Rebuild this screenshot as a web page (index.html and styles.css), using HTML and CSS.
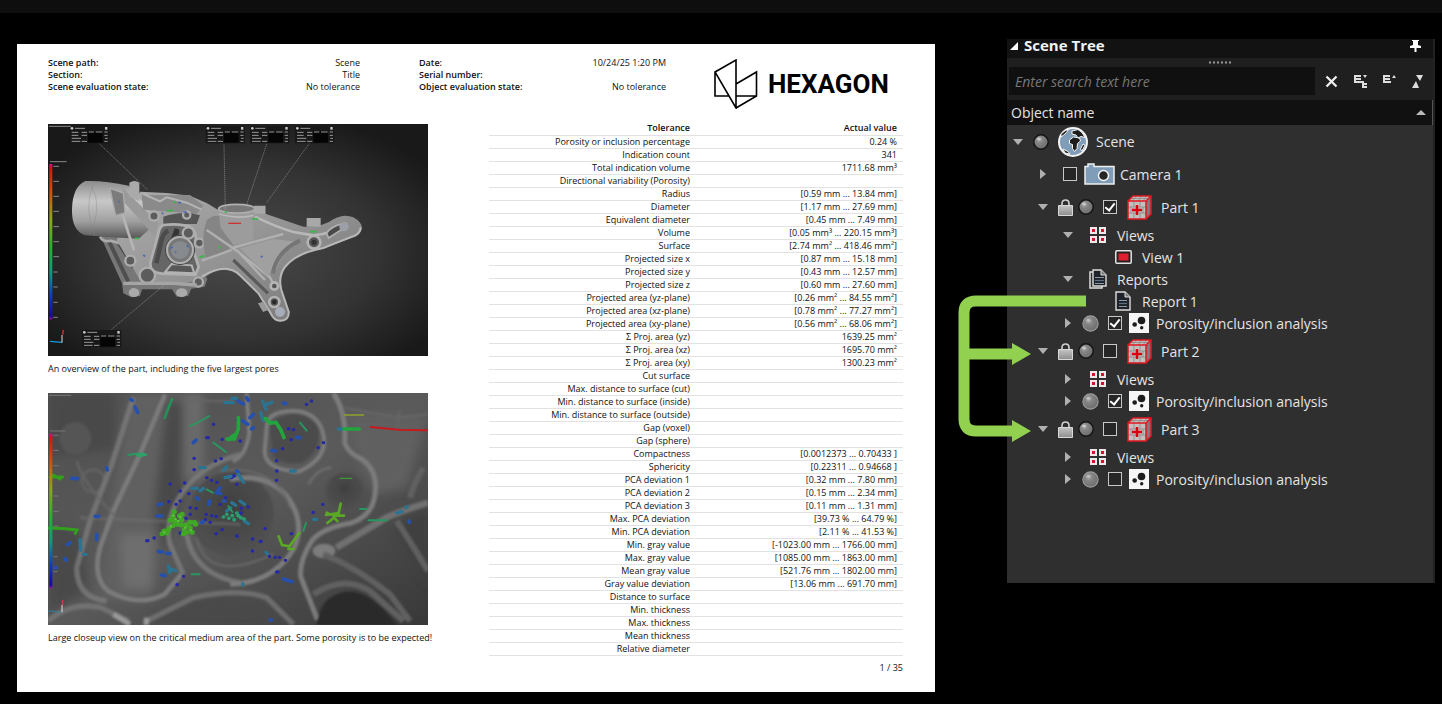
FILE: index.html
```html
<!DOCTYPE html>
<html lang="en">
<head>
<meta charset="utf-8">
<meta name="viewport" content="width=device-width, initial-scale=1">
<title>Porosity report</title>
<link rel="stylesheet" href="styles.css">
</head>
<body>
<svg class="defs" aria-hidden="true">
  <defs>
    <radialGradient id="ball" cx=".38" cy=".32" r=".7"><stop offset="0" stop-color="#b4b4b4"/><stop offset=".35" stop-color="#858585"/><stop offset="1" stop-color="#6c6c6c"/></radialGradient>
    <linearGradient id="lockfill" x1="0" y1="0" x2="0" y2="1"><stop offset="0" stop-color="#c4c4c4"/><stop offset="1" stop-color="#8e8e8e"/></linearGradient>
    <linearGradient id="scale" x1="0" y1="0" x2="0" y2="1"><stop offset="0" stop-color="#d01090"/><stop offset=".03" stop-color="#e01010"/><stop offset=".2" stop-color="#c85a10"/><stop offset=".36" stop-color="#8aa81c"/><stop offset=".55" stop-color="#20b030"/><stop offset=".7" stop-color="#109a80"/><stop offset=".84" stop-color="#1040c0"/><stop offset=".98" stop-color="#1808a0"/><stop offset="1" stop-color="#a010b0"/></linearGradient>
    <symbol id="i-down" viewBox="0 0 10 6"><path d="M0 0h10L5 6z" fill="#b0b0b0"/></symbol>
    <symbol id="i-right" viewBox="0 0 6 10"><path d="M0 0v10L6 5z" fill="#b0b0b0"/></symbol>
    <symbol id="i-ball" viewBox="0 0 16 16"><circle cx="8" cy="8" r="7.2" fill="url(#ball)" stroke="#141414" stroke-width="1.4"/><ellipse cx="6" cy="5" rx="1.8" ry="1.3" fill="#d8d8d8" opacity=".7"/></symbol>
    <symbol id="i-ball2" viewBox="0 0 16 16"><circle cx="8" cy="8" r="7.2" fill="url(#ball)" stroke="#9c9c9c" stroke-width="1"/><ellipse cx="6" cy="5" rx="1.8" ry="1.3" fill="#c8c8c8" opacity=".7"/></symbol>
    <symbol id="i-lock" viewBox="0 0 15 17"><path d="M4 7V4.5C4 2.2 5.4 1 7.5 1S11 2.2 11 4.5V7" fill="none" stroke="#d2d2d2" stroke-width="1.6"/><path d="M.5 6.5h14v10H.5z" fill="url(#lockfill)" stroke="#d8d8d8"/></symbol>
    <symbol id="i-cube" viewBox="0 0 25 25">
      <path d="M1 6l5-5h18v18l-5 5H1z" fill="#c4bebe"/>
      <path d="M19 6l5-5v18l-5 5z" fill="#7c7474"/>
      <path d="M1 12h18M1 18h18M7 6v6M13 6v6M4 12v6M16 12v6M7 18v6M13 18v6M3.500 3.500h18v17M9 1L5 6M15 1l-4 5M20 1l-4 5M19 12l5-5M19 18l5-5" fill="none" stroke="#8a8080" stroke-width=".7"/>
      <path d="M1 6l5-5h18v18l-5 5H1zM1 6h18v18M19 6l5-5" fill="none" stroke="#e01820" stroke-width="1.500"/>
      <path d="M10 10v10M5 15h10" stroke="#d8000c" stroke-width="2.400"/>
    </symbol>
    <symbol id="i-views" viewBox="0 0 16 16"><path d="M0 0h7v7H0zM9 0h7v7H9zM0 9h7v7H0zM9 9h7v7H9z" fill="#f0e8e8"/><path d="M2 2h3v3H2zM11 2h3v3h-3zM2 11h3v3H2zM11 11h3v3h-3z" fill="#d0142c"/></symbol>
    <symbol id="i-view" viewBox="0 0 17 14"><rect x=".8" y=".8" width="15.400" height="12.400" rx="1" fill="#2a2020" stroke="#e4e4e4" stroke-width="1.500"/><path d="M3.500 3.500h10v7h-10z" fill="#e02030"/></symbol>
    <symbol id="i-doc" viewBox="0 0 16 20"><path d="M1 1h9l5 5v13H1z" fill="#20242a" stroke="#dedede" stroke-width="1.400"/><path d="M10 1v5h5" fill="#777" stroke="#dedede"/><path d="M4 9.500h8M4 15.500h8" stroke="#8b98a8" stroke-width="1.200"/><path d="M4 12.500h8" stroke="#5c7088" stroke-width="1.200"/></symbol>
    <symbol id="i-docs" viewBox="0 0 18 20"><path d="M4 3H1v16h12v-2" fill="none" stroke="#dedede" stroke-width="1.500"/><path d="M4 1h8l5 5v11H4z" fill="#20242a" stroke="#dedede" stroke-width="1.400"/><path d="M12 1v5h5" fill="#777" stroke="#dedede"/><path d="M6 8.500h9M6 14.500h9" stroke="#8b98a8" stroke-width="1.200"/><path d="M6 11.500h9" stroke="#5c7088" stroke-width="1.200"/></symbol>
    <symbol id="i-pores" viewBox="0 0 20 20"><path d="M0 0h20v20H0z" fill="#f6f6f6"/><circle cx="12.500" cy="7.500" r="3.800" fill="#1c1c1c"/><circle cx="5.700" cy="11.500" r="2.300" fill="#1c1c1c"/><circle cx="12.700" cy="14.800" r="1.700" fill="#1c1c1c"/></symbol>
    <symbol id="i-camera" viewBox="0 0 31 22"><path d="M1 3.500h3V1h6v2.500h20V21H1z" fill="#7f9cb8" stroke="#f0f0f0" stroke-width="1.500"/><circle cx="19.500" cy="12.500" r="5" fill="#262626" stroke="#f4f4f4" stroke-width="1.500"/></symbol>
    <symbol id="i-globe" viewBox="0 0 30 30"><circle cx="15" cy="15" r="14" fill="#7f9cb8" stroke="#f4f4f4" stroke-width="2"/><path d="M14 4l6-1.500 4 3 3 5-4-1-3 1.500-2-3-4-1zM11.500 13l4-3 6 1 1 3-3 2.500-.5 5-2.500 3-2-3v-4l-3-1zM3 7l5-4 2 .5-3 3.500-4 3zM5 22l5 2.500 2 2.500-5-1zM25 17l2 1-3 6-1.500-2z" fill="#1d1d1d" stroke="#f4f4f4" stroke-width="1"/></symbol>
  </defs>
</svg>

<div class="topbar"></div>
<main class="stage">
  <article class="report">
    <header class="report-head">
      <dl class="meta">
        <div><dt>Scene path:</dt><dd>Scene</dd></div>
        <div><dt>Section:</dt><dd>Title</dd></div>
        <div><dt>Scene evaluation state:</dt><dd>No tolerance</dd></div>
      </dl>
      <dl class="meta">
        <div><dt>Date:</dt><dd>10/24/25 1:20 PM</dd></div>
        <div><dt>Serial number:</dt><dd></dd></div>
        <div><dt>Object evaluation state:</dt><dd>No tolerance</dd></div>
      </dl>
      <div class="brand">
        <svg class="brand-mark" viewBox="0 0 44 50" aria-hidden="true"><path d="M1 13L22 1v48zM1 13v24h13.500M22 25l20.500-12v24L22 49M22 37h20.500" fill="none" stroke="#000" stroke-width="1.600"/></svg>
        <span>HEXAGON</span>
      </div>
    </header>

    <div class="report-body">
      <div class="figures">
        <figure>
          <svg class="picture" viewBox="24 12 1140 696" role="img" aria-label="Overview of the part">
            <defs>
              <radialGradient id="bg1" cx=".5" cy=".55" r=".62"><stop offset="0" stop-color="#4a4a4a"/><stop offset=".6" stop-color="#333"/><stop offset="1" stop-color="#191919"/></radialGradient>
              <linearGradient id="cyl" x1="0" y1="0" x2="0" y2="1"><stop offset="0" stop-color="#8c8c8c"/><stop offset=".35" stop-color="#c8c8c8"/><stop offset=".7" stop-color="#a0a0a0"/><stop offset="1" stop-color="#555"/></linearGradient>
              <linearGradient id="met" x1="0" y1="0" x2="1" y2="1"><stop offset="0" stop-color="#acacac"/><stop offset=".5" stop-color="#929292"/><stop offset="1" stop-color="#747474"/></linearGradient>
              <filter id="soft1"><feGaussianBlur stdDeviation="2"/></filter>
              <g id="tag"><path d="M0 0h118v52H0z" fill="#181818"/><path d="M55 16h44v34H55z" fill="#050505"/><path d="M16 7h30M6 19h20M36 19h16M57 18h16M78 18h20M104 18h10M6 28h20M36 28h16M104 28h10M6 37h28M106 37h8M6 46h26M36 46h16M104 46h10" stroke="#999" stroke-width="3"/><circle cx="7" cy="7" r="4" fill="#ccc"/><path d="M106 3h7v8h-7z" fill="#ccc"/></g>
            </defs>
            <path d="M24 12h1140v696H24z" fill="url(#bg1)"/>
            <g filter="url(#soft1)">
              <path d="M180 345l66 145 4 30 24 12 26-4 6-20h90l14 22 34-2 10-22 40-6 8-22-30-60-260-90z" fill="#777"/>
              <path d="M205 360l60 125M232 362l50 80" stroke="#4f4f4f" stroke-width="12"/>
              <path d="M180 350q10 18 30 12l80 20" fill="none" stroke="#aaa" stroke-width="8"/>
              <path d="M300 215L380 219 450 227 500 249 535 270 640 262 676 257V281L790 320Q850 322 880 298 912 280 940 292 975 312 962 335 955 350 930 356L850 385Q760 402 730 450 716 480 724 510L748 575Q750 605 720 604 705 602 692 580L655 520 600 468Q560 438 520 455L480 480 400 495 300 480 230 360z" fill="url(#met)"/>
              <path d="M136 183q60-2 130 14l90 105-60 54q-80-2-160-10-42-14-40-80 2-66 40-83z" fill="url(#cyl)"/>
              <path d="M160 190q-30 75 4 156M155 200q34 60-4 142" fill="none" stroke="#888" stroke-width="3" opacity=".4"/>
              <path d="M245 200l110 110-10 40-90-100z" fill="#9a9a9a"/><path d="M210 205l40 14 5 60-28 8z" fill="#7c7c7c" stroke="#aaa" stroke-width="4"/><path d="M248 285l34 106" stroke="#b5b5b5" stroke-width="8"/>
              <path d="M268 188q16-10 30 0v56l-30-14z" fill="#aaa"/>
              <path d="M305 225h145l40 32-20 24-160-12z" fill="#8a8a8a"/><path d="M310 222l50 22 20-12 60 16 44 20" fill="none" stroke="#b4b4b4" stroke-width="6"/>
              <path d="M370 290q60-20 110-4l-10 26H370z" fill="#545454"/>
              <path d="M370 315q50-6 80 6 16 10 18 34l-8 36 16 50-10 24-100-4q-40-4-34-36l22-80q4-24 16-30z" fill="#666" stroke="#b0b0b0" stroke-width="8"/>
              <path d="M385 332q-16 6-22 36l-14 62" fill="none" stroke="#4c4c4c" stroke-width="14"/><path d="M404 325q20 0 12 18l-26 20z" fill="#363636"/>
              <path d="M395 432l60 4 8 24-88-4z" fill="#585858" stroke="#b4b4b4" stroke-width="6"/>
              <circle cx="420" cy="390" r="44" fill="#777" stroke="#444" stroke-width="3"/><circle cx="420" cy="390" r="39" fill="none" stroke="#b0b0b0" stroke-width="6"/><circle cx="420" cy="390" r="27" fill="#878b90"/>
              <g fill="#5c5c5c" stroke="#adadad" stroke-width="7"><circle cx="271" cy="422" r="15"/><circle cx="322" cy="466" r="23"/><circle cx="445" cy="339" r="17"/><circle cx="478" cy="369" r="13"/><circle cx="475" cy="486" r="14"/><circle cx="342" cy="288" r="14"/><circle cx="440" cy="285" r="11"/></g>
              <path d="M250 490h150l70 5M280 505v18M425 508v18" stroke="#a5a5a5" stroke-width="10" fill="none"/><ellipse cx="282" cy="518" rx="16" ry="13" fill="#aaa"/><ellipse cx="425" cy="518" rx="17" ry="13" fill="#aaa"/>
              <path d="M500 300q40-30 60 10l20 70-80 40q-20-60 0-120z" fill="#858585"/>
              <path d="M535 268q40-20 100-10l5 26v80l-60 10-38-50z" fill="#9c9c9c"/><ellipse cx="590" cy="266" rx="54" ry="13" fill="#777" stroke="#b0b0b0" stroke-width="5"/><path d="M536 282q60 16 105 4" fill="none" stroke="#b8b8b8" stroke-width="5"/>
              <path d="M642 257h34v24h-34zM800 294h42v26h-42z" fill="#a8a8a8"/>
              <path d="M645 290q60 30 115 46l60 10q60-4 100-36" fill="none" stroke="#b8b8b8" stroke-width="8"/>
              <path d="M500 330l90 62 100 80 15 30M575 390l-90 32M575 384l155-42M590 390l85 90" fill="none" stroke="#b0b0b0" stroke-width="7"/>
              <path d="M600 385l100-28 80 10q-52 24-70 80l-28 20z" fill="#a0a0a0"/><path d="M780 362q-68 30-82 98" fill="none" stroke="#747474" stroke-width="12"/>
              <path d="M485 470Q560 425 600 466L655 520 692 580Q702 602 720 602 748 602 746 575L724 510Q714 470 734 442 766 400 850 384L930 352Q962 344 962 322" fill="none" stroke="#b8b8b8" stroke-width="6"/>
              <path d="M580 420l104 100" stroke="#5a5a5a" stroke-width="10"/>
              <path d="M860 340q10-20 50-30l8 10-52 34z" fill="#4a4a4a" stroke="#b0b0b0" stroke-width="5"/><circle cx="912" cy="320" r="14" fill="#9ca0a6"/>
              <g fill="#555" stroke="#b4b4b4" stroke-width="8"><circle cx="822" cy="367" r="19"/><circle cx="703" cy="498" r="11"/><circle cx="703" cy="546" r="15"/></g><circle cx="822" cy="367" r="8" fill="#333"/><circle cx="703" cy="546" r="7" fill="#2c2c2c"/><circle cx="720" cy="576" r="15" fill="#a7adb8"/><path d="M654 550l16-5 15 25-16 6z" fill="#999"/>
            </g>
            <path d="M175 68l148 142M552 74l4 202M680 72l-60 182M808 70L680 248M210 632l166-140" fill="none" stroke="#aaa" stroke-width="1.500" stroke-dasharray="4 2"/>
            <path d="M380 272h20M400 248l8-4M478 412l16-5M535 385l6-6M554 276h8M285 355h12M635 297h20M810 335h20" stroke="#39b54a" stroke-width="5"/>
            <path d="M415 248h8M430 276h10M310 405l5 4M235 245h4M390 385l8-4M405 395l4 2M440 380l5-3M662 410h6M365 280h5" stroke="#4565ae" stroke-width="5"/>
            <path d="M565 310h38" stroke="#c33" stroke-width="4"/>
            <use href="#tag" x="89" y="18"/><use href="#tag" x="497" y="18"/><use href="#tag" x="630" y="18"/><use href="#tag" x="765" y="18"/><use href="#tag" x="126" y="630"/>
            <path d="M28 132h9v466h-9z" fill="url(#scale)"/><path d="M27 19h66M30 125h50M40 139h17M40 184h17M40 229h17M40 274h17M40 320h17M40 365h17M40 410h17M40 456h13M40 501h13M40 547h13M40 592h13" stroke="#888" stroke-width="3"/>
            <path d="M30 664l36 3" stroke="#159be0" stroke-width="4"/><path d="M66 668V645" stroke="#ddd" stroke-width="3"/><path d="M68 644l2-14" stroke="#d33" stroke-width="4"/>
          </svg>
          <figcaption>An overview of the part, including the five largest pores</figcaption>
        </figure>
        <figure>
          <svg class="picture" viewBox="24 16 1140 696" role="img" aria-label="Closeup of pores in the part">
            <defs>
              <linearGradient id="bg2" x1="0" y1="0" x2="1" y2="1"><stop offset="0" stop-color="#505050"/><stop offset=".5" stop-color="#5a5a5a"/><stop offset="1" stop-color="#383838"/></linearGradient>
              <radialGradient id="hole" cx=".5" cy=".4" r=".6"><stop offset="0" stop-color="#404040"/><stop offset="1" stop-color="#525252"/></radialGradient>
              <filter id="soft2"><feGaussianBlur stdDeviation="3"/></filter>
              <filter id="soft3"><feGaussianBlur stdDeviation="14"/></filter>
            </defs>
            <path d="M24 16h1140v696H24z" fill="url(#bg2)"/>
            <g filter="url(#soft3)">
              <path d="M270 16h160v200l-60 120-40 300H180l20-200z" fill="#606060"/><path d="M380 40h50v300l-60 160-30-120z" fill="#4a4a4a"/>
              <path d="M24 16h200v170l-200 20z" fill="#484848"/><path d="M24 400l100 40 20 170-120 70z" fill="#4a4a4a"/><path d="M240 440h100v160h-90z" fill="#6e6e6e"/>
              <path d="M430 16h60v260h-60z" fill="#6a6a6a"/><path d="M920 80h240l-60 220-90 20-60-100z" fill="#606060"/><path d="M1060 420l110-60v240z" fill="#404040"/><path d="M330 680l200-60 150 30 60 60H330z" fill="#4a4a4a"/>
            </g>
            <g filter="url(#soft2)" fill="none" stroke="#7c7c7c">
              <circle cx="106" cy="152" r="48" fill="#555" stroke="none"/><circle cx="160" cy="280" r="34" stroke="#606060" stroke-width="9"/>
              <path d="M280 30L215 230 150 400 110 540q0 90 90 100" stroke-width="16" opacity=".75"/>
              <path d="M375 20L300 200 220 370 180 480q-24 90 24 130 90 50 170 10l50-60" stroke-width="14"/>
              <path d="M600 200q-110 30-170 110-60 90-40 160l40 90M440 440q20 120 160 145" stroke-width="15" opacity=".8"/>
              <circle cx="575" cy="380" r="128" fill="url(#hole)" stroke="none"/>
              <path d="M570 275q110-20 170 50 60 80 20 160-60 100-190 105" stroke-width="15"/>
              <path d="M540 250q170-20 210 110M470 450q30 140 230 50" stroke="#686868" stroke-width="6"/>
              <path d="M620 16l8 120q-10 70-50 85M680 120q0-50 80-50 60 0 84 50 26 70-30 110-40 30-60 20-80-10-80-60z" stroke-width="12"/>
              <path d="M690 120q10-34 74-42 60 10 72 52 6 60-50 96-60 6-86-20z" fill="#4c4c4c" stroke="none"/>
              <path d="M880 16q40 60 34 150 10 30 54 50 50 40 36 110-10 60-70 80-80 12-116 50-40 60-36 110l50 130" stroke-width="15"/>
              <path d="M805 290q30-50 70-50" stroke="#6c6c6c" stroke-width="8"/><circle cx="914" cy="314" r="59" fill="url(#hole)" stroke="none"/>
              <path d="M1164 345q-80 25-125 45l-150 90" stroke="#707070" stroke-width="20"/><ellipse cx="852" cy="490" rx="34" ry="22" fill="#7c7c7c" stroke="none"/>
              <path d="M1070 400q40 60 94 150M1150 240q-30 50-40 90M850 500q100 40 200 120l60 80M820 620q90-60 170-10l100 90" stroke="#606060" stroke-width="18"/>
              <path d="M830 712q10-90 90-100 70-6 150 100z" fill="#292929" stroke="none"/>
              <path d="M24 700q70-60 160-40l80 40M320 700l140-70q140-30 220 0l80 80" stroke-width="16" opacity=".7"/><path d="M120 390l230 10 250 10" stroke="#707070" stroke-width="8" opacity=".6"/><path d="M320 690l-2 22M220 680l50 30" stroke="#999" stroke-width="16"/>
              <path d="M440 40h140M914 60l160 30 90-10M1080 70l-12 60M110 220q20 70 120 170" stroke="#666" stroke-width="6"/>
            </g>
            <g fill="none" stroke-linecap="round">
              <path d="M462 212h1M462 246h1M434 286h1M420 310h1M446 318h1M390 289h1M386 342h1M420 340h1M408 350h1M450 360h1M468 362h1M450 380h1M438 392h1M498 380h1M515 384h1M528 386h1M495 396h1M510 404h1M546 426h1M528 438h1M590 445h1M320 459h4M342 451h1M420 436h3M500 270h1M514 278h1M530 284h1M540 350h1M556 330h1M590 290h1M574 270h1M430 566h1M411 591h1M526 220h1M543 213h1M520 110h1M546 155h1M500 150h5M593 97h1M600 160h1M591 446h1M660 461h4M675 423h1M637 454h1M637 490h1M705 509h1M718 509h1M736 518h1M688 506h1M710 553h4M709 278h1M710 250h1M709 219h1M727 183h1M745 123h1M760 126h1M753 156h1M799 50h1M814 40h1M848 350h1M819 374h1M754 438h1M834 180h1M850 165h1M604 362h1M624 358h1M603 376h1M580 265h3" stroke="#2529a6" stroke-width="10"/>
              <path d="M272 35l5 3M285 58l8 16M95 272l18 1M200 240l2 7M165 386h12M170 440v16M90 465l-8 6M76 513l3 5M46 540h3M355 351l10-2M350 385h16M460 165l8-8M470 330l6 5M485 405l5-3M510 340l-4 10M355 491l12 2M380 497l10 1M365 562l10 2M530 315l12 3M550 340h5M590 250l6 5M594 40l16 9M640 80l-10 10M730 46l8 2M695 188l12 2M770 149l10 1M730 574l26 8M690 697h5M1108 400v4M608 100l15 10M540 300l-10 15M640 120l-5 4M620 30l5 8" stroke="#2650ae" stroke-width="11"/>
              <path d="M555 45h25M120 455l2 32M130 500h8M385 535l5 20M395 545l12 4M455 302h18M480 310l10-8M480 240h16M560 238l-10 10M555 270l18-4M595 260l16 24M560 370l12-10M575 345l12 8M600 340l14 10M625 408l-12-8M662 75l8 24M680 50l16-6M668 40l10 25M820 395h10M895 124h12M1070 376l16-4M1098 360l4-3M608 588v4M678 494l4 4M752 250h14M575 32h15" stroke="#2a7492" stroke-width="10"/>
              <path d="M450 115q25-10 58-30M375 90l22-56M520 165l38 28M500 305l18 10M455 560h24M565 355l12 18M780 105l20 24M790 430l8-24M985 398h56M960 364h20M265 202q35-8 54 0" stroke="#29955f" stroke-width="6"/><path d="M285 200l24-6 14 8-26 8z" fill="#30a068"/><path d="M395 34l-14 34-8 24" stroke="#268f58" stroke-width="6"/>
              <path d="M550 388h1M560 380h1M566 392h1M576 384h1M582 396h1M594 384h1M602 390h1M590 376h1M612 394h1" stroke="#2a9c70" stroke-width="11"/>
              <path d="M30 268h38M40 262l20 12M26 421q45 0 85 6l-5 10" stroke="#32a01c" stroke-width="9"/>
              <path d="M595 90v34l-12 30-22 0M676 92l14 14 18-2 14 22 10 24M912 124h46M565 156l18-14" stroke="#22a53c" stroke-width="11"/>
              <path d="M402 372h1M398 386h1M390 398h1M404 400h1M418 384h1M424 396h1M412 410h1M398 414h1M386 424h1M372 430h1M366 438h1M380 436h1M424 412h1M432 426h1M438 412h1M450 404h1M462 404h1M466 410h1M450 420h1M456 434h1M440 434h1M430 438h1M426 380h1" stroke="#40a825" stroke-width="15"/>
              <path d="M400 384h1M406 394h1M414 400h1M420 388h1M436 420h1M452 428h1M392 416h1M372 434h1" stroke="#5cc23c" stroke-width="7"/>
              <path d="M716 446l10 26 22 4 30-40M745 484h16M902 348l-6 28-38 6M880 384h32M862 406l20-16 10 10M860 375l12 6" stroke="#5aa824" stroke-width="8"/>
              <path d="M900 272h36" stroke="#3e9a34" stroke-width="4"/><path d="M913 82h58" stroke="#8ca22c" stroke-width="4"/><path d="M992 118l85 8 84 2" stroke="#c81a1c" stroke-width="6"/>
            </g>
            <path d="M28 138h9v464h-9z" fill="url(#scale)"/><path d="M27 23h66M30 130h46M40 143h16M40 188h16M40 234h16M40 325h16M40 371h16M40 415h16M40 507h13M40 552h13" stroke="#777" stroke-width="3"/>
            <path d="M26 670l38 3" stroke="#2c86ac" stroke-width="4" stroke-dasharray="6 3"/><path d="M66 674v-22" stroke="#ddd" stroke-width="3"/><path d="M68 652v-16" stroke="#b44" stroke-width="4"/>
          </svg>
          <figcaption>Large closeup view on the critical medium area of the part. Some porosity is to be expected!</figcaption>
        </figure>
      </div>

      <div class="values">
        <table>
          <thead><tr><th scope="col">Tolerance</th><th scope="col">Actual value</th></tr></thead>
          <tbody>
            <tr><td>Porosity or inclusion percentage</td><td>0.24 %</td></tr>
            <tr><td>Indication count</td><td>341</td></tr>
            <tr><td>Total indication volume</td><td>1711.68 mm³</td></tr>
            <tr><td>Directional variability (Porosity)</td><td></td></tr>
            <tr><td>Radius</td><td>[0.59 mm ... 13.84 mm]</td></tr>
            <tr><td>Diameter</td><td>[1.17 mm ... 27.69 mm]</td></tr>
            <tr><td>Equivalent diameter</td><td>[0.45 mm ... 7.49 mm]</td></tr>
            <tr><td>Volume</td><td>[0.05 mm³ ... 220.15 mm³]</td></tr>
            <tr><td>Surface</td><td>[2.74 mm² ... 418.46 mm²]</td></tr>
            <tr><td>Projected size x</td><td>[0.87 mm ... 15.18 mm]</td></tr>
            <tr><td>Projected size y</td><td>[0.43 mm ... 12.57 mm]</td></tr>
            <tr><td>Projected size z</td><td>[0.60 mm ... 27.60 mm]</td></tr>
            <tr><td>Projected area (yz-plane)</td><td>[0.26 mm² ... 84.55 mm²]</td></tr>
            <tr><td>Projected area (xz-plane)</td><td>[0.78 mm² ... 77.27 mm²]</td></tr>
            <tr><td>Projected area (xy-plane)</td><td>[0.56 mm² ... 68.06 mm²]</td></tr>
            <tr><td>Σ Proj. area (yz)</td><td>1639.25 mm²</td></tr>
            <tr><td>Σ Proj. area (xz)</td><td>1695.70 mm²</td></tr>
            <tr><td>Σ Proj. area (xy)</td><td>1300.23 mm²</td></tr>
            <tr><td>Cut surface</td><td></td></tr>
            <tr><td>Max. distance to surface (cut)</td><td></td></tr>
            <tr><td>Min. distance to surface (inside)</td><td></td></tr>
            <tr><td>Min. distance to surface (outside)</td><td></td></tr>
            <tr><td>Gap (voxel)</td><td></td></tr>
            <tr><td>Gap (sphere)</td><td></td></tr>
            <tr><td>Compactness</td><td>[0.0012373 ... 0.70433 ]</td></tr>
            <tr><td>Sphericity</td><td>[0.22311 ... 0.94668 ]</td></tr>
            <tr><td>PCA deviation 1</td><td>[0.32 mm ... 7.80 mm]</td></tr>
            <tr><td>PCA deviation 2</td><td>[0.15 mm ... 2.34 mm]</td></tr>
            <tr><td>PCA deviation 3</td><td>[0.11 mm ... 1.31 mm]</td></tr>
            <tr><td>Max. PCA deviation</td><td>[39.73 % ... 64.79 %]</td></tr>
            <tr><td>Min. PCA deviation</td><td>[2.11 % ... 41.53 %]</td></tr>
            <tr><td>Min. gray value</td><td>[-1023.00 mm ... 1766.00 mm]</td></tr>
            <tr><td>Max. gray value</td><td>[1085.00 mm ... 1863.00 mm]</td></tr>
            <tr><td>Mean gray value</td><td>[521.76 mm ... 1802.00 mm]</td></tr>
            <tr><td>Gray value deviation</td><td>[13.06 mm ... 691.70 mm]</td></tr>
            <tr><td>Distance to surface</td><td></td></tr>
            <tr><td>Min. thickness</td><td></td></tr>
            <tr><td>Max. thickness</td><td></td></tr>
            <tr><td>Mean thickness</td><td></td></tr>
            <tr><td>Relative diameter</td><td></td></tr>
          </tbody>
        </table>
        <p class="page-number">1 / 35</p>
      </div>
    </div>
  </article>

  <aside class="panel">
    <header class="panel-title">
      <svg class="corner" viewBox="0 0 8 8" aria-hidden="true"><path d="M8 0v8H0z" fill="#fff"/></svg>
      <h2>Scene Tree</h2>
      <button class="pin" aria-label="Pin panel"><svg viewBox="0 0 11 12" width="11" height="12"><path d="M2 0h7v1H8v4l3 1v2H6.500v4h-2V8H0V6l3-1V1H2z" fill="#fff"/></svg></button>
    </header>
    <div class="search">
      <svg class="grip" viewBox="0 0 22 3" aria-hidden="true"><path d="M0 1.500h22" stroke="#999" stroke-width="2" stroke-dasharray="2 2"/></svg>
      <input type="text" aria-label="Search the scene tree" placeholder="Enter search text here">
      <div class="tools">
        <button aria-label="Clear"><svg viewBox="0 0 13 13" width="13" height="13"><path d="M1.500 1.500l10 10M11.500 1.500l-10 10" stroke="#eee" stroke-width="2.300"/></svg></button>
        <button aria-label="Expand all"><svg viewBox="0 0 13 13" width="13" height="13"><path d="M1 0v8M1 1h6M1 4h6M1 7h8M9 6v7M9 9h4M9 12h4" fill="none" stroke="#ddd" stroke-width="2"/><path d="M9 0h4l-2 3z" fill="#ddd"/></svg></button>
        <button aria-label="Collapse all"><svg viewBox="0 0 13 13" width="13" height="13"><path d="M1 0v8M1 1h6M1 4h6M1 7h7" fill="none" stroke="#ddd" stroke-width="2"/><path d="M9 3h4l-2-3z" fill="#ddd"/></svg></button>
        <button aria-label="Sort"><svg viewBox="0 0 11 13" width="11" height="13"><path d="M4 0h7L8 6zM0 13h7L4 6z" fill="#ddd"/></svg></button>
      </div>
    </div>
    <button class="column-head">Object name <svg viewBox="0 0 10 5" width="10" height="5" aria-hidden="true"><path d="M0 5h10L5 0z" fill="#bbb"/></svg></button>

    <ul class="tree">
      <li>
        <div class="row scene"><button class="twisty" aria-label="Collapse Scene"><svg class="down"><use href="#i-down"/></svg></button><svg class="ball"><use href="#i-ball"/></svg><svg class="globe"><use href="#i-globe"/></svg><span>Scene</span></div>
        <ul>
          <li><div class="row camera"><button class="twisty" aria-label="Expand Camera 1"><svg class="right"><use href="#i-right"/></svg></button><input type="checkbox" id="c1"><label for="c1"><svg class="cam"><use href="#i-camera"/></svg>Camera 1</label></div></li>
          <li>
            <div class="row part"><button class="twisty" aria-label="Collapse Part 1"><svg class="down"><use href="#i-down"/></svg></button><svg class="lock"><use href="#i-lock"/></svg><svg class="ball"><use href="#i-ball"/></svg><input type="checkbox" id="p1" checked><label for="p1"><svg class="cube"><use href="#i-cube"/></svg>Part 1</label></div>
            <ul>
              <li>
                <div class="row item"><button class="twisty" aria-label="Collapse Views"><svg class="down"><use href="#i-down"/></svg></button><span class="slot"><svg class="views"><use href="#i-views"/></svg></span><span>Views</span></div>
                <ul><li><div class="row item leaf"><span class="slot"><svg class="view"><use href="#i-view"/></svg></span><span>View 1</span></div></li></ul>
              </li>
              <li>
                <div class="row item"><button class="twisty" aria-label="Collapse Reports"><svg class="down"><use href="#i-down"/></svg></button><span class="slot"><svg class="docs"><use href="#i-docs"/></svg></span><span>Reports</span></div>
                <ul><li><div class="row item leaf"><span class="slot"><svg class="doc"><use href="#i-doc"/></svg></span><span>Report 1</span></div></li></ul>
              </li>
              <li><div class="row analysis"><button class="twisty" aria-label="Expand analysis"><svg class="right"><use href="#i-right"/></svg></button><svg class="ball"><use href="#i-ball2"/></svg><input type="checkbox" id="a1" checked><label for="a1"><svg class="pores"><use href="#i-pores"/></svg>Porosity/inclusion analysis</label></div></li>
            </ul>
          </li>
          <li>
            <div class="row part"><button class="twisty" aria-label="Collapse Part 2"><svg class="down"><use href="#i-down"/></svg></button><svg class="lock"><use href="#i-lock"/></svg><svg class="ball"><use href="#i-ball"/></svg><input type="checkbox" id="p2"><label for="p2"><svg class="cube"><use href="#i-cube"/></svg>Part 2</label></div>
            <ul>
              <li><div class="row item"><button class="twisty" aria-label="Expand Views"><svg class="right"><use href="#i-right"/></svg></button><span class="slot"><svg class="views"><use href="#i-views"/></svg></span><span>Views</span></div></li>
              <li><div class="row analysis"><button class="twisty" aria-label="Expand analysis"><svg class="right"><use href="#i-right"/></svg></button><svg class="ball"><use href="#i-ball2"/></svg><input type="checkbox" id="a2" checked><label for="a2"><svg class="pores"><use href="#i-pores"/></svg>Porosity/inclusion analysis</label></div></li>
            </ul>
          </li>
          <li>
            <div class="row part"><button class="twisty" aria-label="Collapse Part 3"><svg class="down"><use href="#i-down"/></svg></button><svg class="lock"><use href="#i-lock"/></svg><svg class="ball"><use href="#i-ball"/></svg><input type="checkbox" id="p3"><label for="p3"><svg class="cube"><use href="#i-cube"/></svg>Part 3</label></div>
            <ul>
              <li><div class="row item"><button class="twisty" aria-label="Expand Views"><svg class="right"><use href="#i-right"/></svg></button><span class="slot"><svg class="views"><use href="#i-views"/></svg></span><span>Views</span></div></li>
              <li><div class="row analysis"><button class="twisty" aria-label="Expand analysis"><svg class="right"><use href="#i-right"/></svg></button><svg class="ball"><use href="#i-ball2"/></svg><input type="checkbox" id="a3"><label for="a3"><svg class="pores"><use href="#i-pores"/></svg>Porosity/inclusion analysis</label></div></li>
            </ul>
          </li>
        </ul>
      </li>
    </ul>
    <svg class="copy-arrows" viewBox="0 0 128 148" aria-hidden="true"><path d="M128 6H18Q6 6 6 18v106q0 12 12 12h37M6 59h49" fill="none" stroke="#92d050" stroke-width="11"/><path d="M54 48l19 11-19 11zM54 125l19 11-19 11z" fill="#92d050"/></svg>
  </aside>
</main>
</body>
</html>
```
FILE: styles.css
```css
* { box-sizing: border-box; }

body {
  margin: 0;
  min-height: 100vh;
  background: #000;
  color: #e4e4e4;
  font-family: "Open Sans", "Noto Sans", sans-serif;
  font-size: 14px;
}

button {
  padding: 0;
  border: 0;
  background: none;
  color: inherit;
  font: inherit;
}

svg { display: block; flex: none; }
.defs { position: absolute; width: 0; height: 0; }

.topbar { height: 13px; background: #0e0e0e; }

.stage {
  display: grid;
  grid-template-columns: minmax(0, 918fr) minmax(0, 428fr);
  align-items: start;
  gap: 72px;
  padding: 26px 7px 12px 17px;
}

/* Report sheet */
.report {
  margin-top: 5px;
  padding: 13px 32px 18px 31px;
  background: #fff;
  color: #111;
  font-size: 9px;
  line-height: 12px;
}

.report-head {
  display: flex;
  align-items: flex-start;
  height: 65px;
}

.meta { margin: 0; flex: 312 1 0; margin-right: 59px; }
.meta + .meta { flex-grow: 247; margin-right: 48px; }
.meta div { display: flex; justify-content: space-between; }
.meta dt { font-weight: 600; }
.meta dd { margin: 0; }

.brand {
  display: flex;
  align-items: center;
  gap: 10px;
  width: 189px;
  padding-top: 2px;
  color: #000;
  font: 700 26px/50px Roboto, sans-serif;
}
.brand-mark { width: 44px; height: 50px; }

.report-body {
  display: grid;
  grid-template-columns: minmax(0, 380fr) minmax(0, 414fr);
  gap: 61px;
}

.figures { padding-top: 2px; }
figure { margin: 0 0 18px; }
.picture { width: 100%; aspect-ratio: 380 / 232; }
figcaption { padding-top: 7px; white-space: nowrap; }

table { width: 100%; table-layout: fixed; border-collapse: collapse; }
th, td {
  height: 13px;
  padding: 0 6px 0 0;
  border-bottom: 1px solid #e2e2e2;
  text-align: right;
  white-space: nowrap;
}
th { font-weight: 600; }

.page-number { margin: 6px 0 0; text-align: right; }

/* Scene tree */
.panel {
  position: relative;
  padding-bottom: 93px;
  border-right: 2px solid #222;
  background: #2f2f2f;
}

.panel-title {
  display: flex;
  align-items: center;
  height: 19px;
  padding: 0 12px 6px 3px;
  background: #121212;
}
.corner { width: 8px; height: 8px; }
h2 { flex: 1; margin: 0 0 0 6px; color: #f2f2f2; font-size: 15px; line-height: 15px; font-weight: 700; }

.search {
  position: relative;
  display: flex;
  align-items: center;
  height: 42px;
  padding: 4px 10px 0 2px;
  background: #1f1f1f;
}
.grip { position: absolute; top: 3px; left: 50%; width: 22px; height: 3px; margin-left: -11px; }
.search input {
  flex: 1;
  min-width: 0;
  height: 28px;
  margin: 0;
  padding: 0 6px;
  border: 0;
  background: #101010;
  color: #ddd;
  font: italic 14px "Open Sans", "Noto Sans", sans-serif;
}
.search input::placeholder { color: #777; opacity: 1; }
.tools { display: flex; justify-content: space-between; width: 98px; margin-left: 10px; }

.column-head {
  display: flex;
  align-items: center;
  justify-content: space-between;
  width: 100%;
  height: 25px;
  padding: 0 6px 0 4px;
  border-right: 1px solid #555;
  background: #111;
}

.tree, .tree ul { margin: 0; padding: 0; list-style: none; }
.tree ul { padding-left: 25px; }

.row { display: flex; align-items: center; height: 22px; white-space: nowrap; }
.row label { display: flex; align-items: center; }
.row.scene { height: 33px; }
.row.camera { height: 32px; }
.row.part { height: 34px; }

.twisty { display: flex; justify-content: center; width: 22px; }
.down { width: 10px; height: 6px; }
.right { width: 6px; height: 10px; }

.ball { width: 16px; height: 16px; }
.lock { width: 15px; height: 17px; margin: 0 5px 0 4px; }
.globe { width: 30px; height: 30px; margin: 0 8px 0 9px; }
.cam { width: 31px; height: 22px; margin: 0 5px 0 7px; }
.cube { width: 25px; height: 25px; margin: 0 9px 0 10px; }
.pores { width: 20px; height: 20px; margin: 0 7px; }
.scene .ball { margin-left: 4px; }
.part .ball { margin-right: 9px; }
.analysis .ball { width: 17px; height: 17px; margin: 0 9px 0 3px; }

.slot { display: flex; justify-content: center; width: 18px; margin: 0 10px; }
.leaf { padding-left: 22px; }
.views { width: 16px; height: 16px; }
.view { width: 17px; height: 14px; }
.doc { width: 16px; height: 20px; }
.docs { width: 18px; height: 20px; }

.row input {
  display: grid;
  place-items: center;
  flex: none;
  width: 14px;
  height: 14px;
  margin: 0;
  appearance: none;
  border: 1px solid #c8c8c8;
  background: #262626;
}
.row.camera input { margin-left: 9px; }
.row input:checked::before {
  content: "";
  width: 4px;
  height: 8px;
  margin-bottom: 2px;
  border: solid #fff;
  border-width: 0 2px 2px 0;
  transform: rotate(38deg);
}

.copy-arrows { position: absolute; top: 256px; left: -49px; width: 128px; height: 148px; }
```
